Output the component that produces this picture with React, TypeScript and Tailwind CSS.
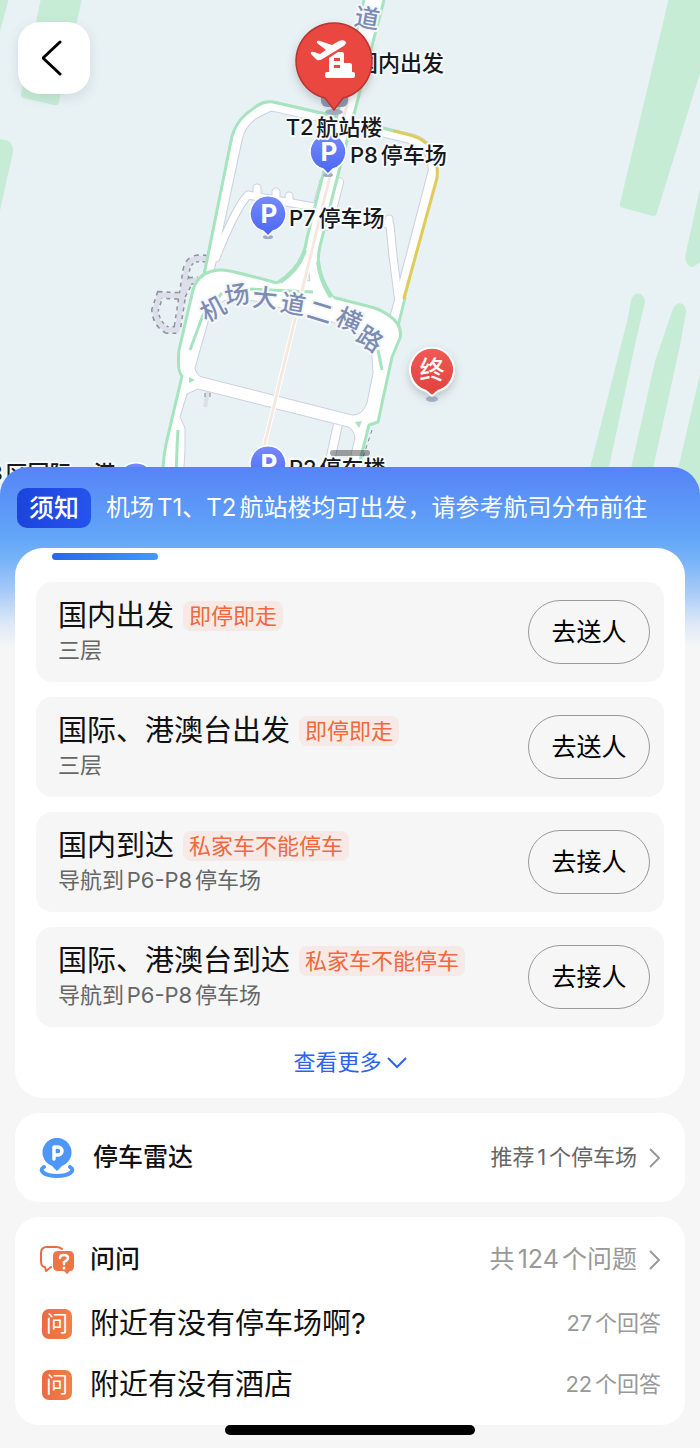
import React from 'react';

type Place = {
  name: string;
  tag: string;
  detail: string;
  action: string;
};

const places: Place[] = [
  { name: '国内出发', tag: '即停即走', detail: '三层', action: '去送人' },
  { name: '国际、港澳台出发', tag: '即停即走', detail: '三层', action: '去送人' },
  { name: '国内到达', tag: '私家车不能停车', detail: '导航到P6-P8停车场', action: '去接人' },
  { name: '国际、港澳台到达', tag: '私家车不能停车', detail: '导航到P6-P8停车场', action: '去接人' },
];

const questions = [
  { title: '附近有没有停车场啊?', answers: '27个回答' },
  { title: '附近有没有酒店', answers: '22个回答' },
];

const roadLabel = [
  { char: '机', x: 213, y: 309, angle: -28 },
  { char: '场', x: 237, y: 295, angle: -10 },
  { char: '大', x: 265, y: 298, angle: 5 },
  { char: '道', x: 293, y: 304, angle: 10 },
  { char: '二', x: 320, y: 312, angle: 17 },
  { char: '横', x: 349, y: 320, angle: 24 },
  { char: '路', x: 370, y: 339, angle: 33 },
  { char: '道', x: 367, y: 18, angle: 10 },
];

const tunnel = 'M207 259 Q188 255 186 272 L177 330 L167 330 Q156 324 155 310 L160 295 L182 296 L190 281 L198 280';
const sideRoads =
  'M216 258 L221 245 Q238 205 248 195 L314 207 M257 195 V188 M276 198 V192 M289 202 V196 M352 214 L390 225 L393 256 L398 295 M389 222 V219';
const outerLoop = 'M206 285 L237 140 Q240 124 254 114 L266 108 Q271 105 277 107 L330 119 L412 139 Q435 147 433 172 L393 325';
const ringRoad =
  'M162 500 Q162 460 167 440 L182 376 Q177 372 179 350 L193 290 Q199 270 222 270 Q230 270 277 283 L375 308 Q404 320 400 338 L392 357 L378 422 L369 425 L350 500 H340 L355 438 Q354 430 348 427 L198 389 L187 394 L180 417 L185 428 V450 L182 500 Z M195 368 L208 322 Q214 300 232 299 L255 301 L292 311 L332 322 Q368 330 372 357 L373 373 L367 403 Q362 416 352 415 L202 377 Q196 375 195 368 Z';

function ParkingPin({ x, y }: { x: number; y: number }) {
  return (
    <g transform={`translate(${x} ${y})`}>
      <ellipse cx="0" cy="23" rx="5" ry="2" fill="#9eabc9" />
      <path
        d="M0 22 L-5 17 A18 18 0 1 1 5 17 Z"
        fill="url(#parking)"
        stroke="#fff"
        strokeWidth="1.5"
        strokeLinejoin="round"
      />
      <text x="1" y="9" textAnchor="middle" className="fill-white text-[26px] font-bold">P</text>
    </g>
  );
}

function AirportMap() {
  return (
    <svg
      className="block h-[497px] w-full bg-[#e8f1f4]"
      viewBox="0 0 700 497"
      preserveAspectRatio="xMidYMid slice"
      role="img"
      aria-label="机场地图"
    >
      <defs>
        <linearGradient id="parking" x1="0" y1="0" x2="0" y2="1">
          <stop offset="0" stopColor="#758afa" />
          <stop offset="1" stopColor="#4a67f5" />
        </linearGradient>
        <linearGradient id="destination" x1="0" y1="0" x2="0" y2="1">
          <stop offset="0" stopColor="#ef5b56" />
          <stop offset="1" stopColor="#e2413d" />
        </linearGradient>
        <filter id="shadow" x="-30%" y="-30%" width="160%" height="160%">
          <feDropShadow dx="0" dy="4" stdDeviation="4" floodColor="#56616b" floodOpacity="0.3" />
        </filter>
      </defs>

      {/* grass */}
      <g fill="#c6ecd5" stroke="#c6ecd5" strokeLinejoin="round" strokeWidth="8">
        <path d="M-6 -6 H6 L-6 38 Z" />
        <path d="M46 -6 H79 L55 101 L25 94 Z" />
        <path d="M-8 145 Q0 142 4 144 Q9 144 9 152 L-4 210 Z" />
        <path d="M674 -6 H720 L653 212 L624 204 Z" />
        <path d="M706 180 L690 253 Q688 261 692 263 L710 250 Z" />
        <path d="M635 301 Q638 294 641 301 L631 344 L598 500 H586 L632 318 Z" />
        <path d="M676 312 Q680 303 682 311 L676 345 L642 500 H628 L659 362 Z" />
        <path d="M706 366 L675 500 H710 Z" />
      </g>

      {/* tunnels */}
      <g fill="none">
        <path d={tunnel} stroke="#8f939c" strokeWidth="8" strokeDasharray="4 4" />
        <path d={tunnel} stroke="#dcdfe9" strokeWidth="5" />
        <path d="M208 390 L205 407" stroke="#dcdfe9" strokeWidth="4" />
        <path d="M205 393 v8 M210 393 v8 M372 430 L362 460" stroke="#83878d" strokeWidth="1" strokeDasharray="4 4" />
      </g>

      {/* side roads */}
      <g fill="none" strokeLinecap="round" strokeLinejoin="round">
        <path d={sideRoads} stroke="#cccfe0" strokeWidth="9" />
        <path d="M338 424 L328 470 M324 182 L314 220 M339 182 L328 226" stroke="#cccfe0" strokeWidth="10" />
        <path d={outerLoop} stroke="#cccfe0" strokeWidth="11" />
        <path d={sideRoads} stroke="#fff" strokeWidth="7" />
        <path d="M338 424 L328 470 M324 182 L314 220 M339 182 L328 226" stroke="#fff" strokeWidth="8" />
        <path d={outerLoop} stroke="#fff" strokeWidth="9" />
        <path d="M203 280 L232 136 Q236 123 246 114 L258 105 Q265 101 273 102 L330 115 L394 131" stroke="#a6e4bf" strokeWidth="3" />
        <path d="M405 298 L397 330" stroke="#a6e4bf" strokeWidth="3" />
        <path d="M394 131 L410 135 Q440 143 437 178 L404 298" stroke="#e0cd58" strokeWidth="3" />
      </g>

      {/* ring road and the central carriageways */}
      <g fill="none" strokeLinejoin="round">
        <path d={ringRoad} fill="#fff" fillRule="evenodd" stroke="#cccfe0" strokeWidth="1" />
        <path
          d="M162 500 Q162 460 167 440 L182 376 Q177 372 179 350 L193 290 Q199 270 222 270 Q230 270 277 283 M328 296 L375 308 Q404 320 400 338 L392 357 L378 422 L369 425 L350 500"
          stroke="#a6e4bf"
          strokeWidth="3"
        />
        <path d="M364 0 L323 175 L306 240 Q303 266 277 283 L300 296 L335 300 Q315 275 319 250 L338 175 L384 0 Z" fill="#fff" />
        <path d="M364 0 L323 175 L307 238 Q304 266 277 283 M384 0 L338 175 L320 246 Q314 272 330 297" stroke="#a6e4bf" strokeWidth="3" />
        <path d="M305 250 Q299 270 280 282 M318 262 Q320 280 332 297" stroke="#a6e4bf" strokeWidth="4" />
        <path d="M308 268 L303 279 L310 281 Z" fill="#e8f1f4" stroke="#cccfe0" strokeWidth="1" />
        <path d="M178 430 Q176 460 176 500 M222 293 L203 315 L190 350 M250 289 L313 292 M378 350 L382 370" stroke="#a6e4bf" strokeWidth="3" />
        <path d="M189 377 L195 380 L189 383 Z M355 422 L362 421 L359 428 Z" fill="#a6e4bf" />
        <path d="M350 92 L329 180 L262 455" stroke="#fff" strokeWidth="5" />
        <path d="M350 92 L329 180 L262 455" stroke="#f7e8df" strokeWidth="3" />
      </g>

      <g
        fontFamily='Inter, "Noto Sans CJK SC", sans-serif'
        stroke="#f4f8fa"
        strokeWidth="4"
        strokeLinejoin="round"
        paintOrder="stroke"
      >
        {roadLabel.map((label, i) => (
          <text
            key={i}
            transform={`translate(${label.x} ${label.y}) rotate(${label.angle})`}
            y="9"
            textAnchor="middle"
            className="fill-[#7d8cb4] text-[25px] font-medium"
          >
            {label.char}
          </text>
        ))}
      </g>

      <g stroke="none" fontFamily='Inter, "Noto Sans CJK SC", sans-serif'>
        <ParkingPin x={328} y={152} />
        <ParkingPin x={268} y={214} />
        <ParkingPin x={268} y={464} />
        <ParkingPin x={136} y={481} />
      </g>

      <g
        fontFamily='Inter, "Noto Sans CJK SC", sans-serif'
        stroke="#f6fafb"
        strokeWidth="4"
        strokeLinejoin="round"
        paintOrder="stroke"
        className="fill-[#17191c] text-[22px] font-medium [text-autospace:normal]"
      >
        <text x="356" y="71">国内出发</text>
        <text x="334" y="135" textAnchor="middle">T2航站楼</text>
        <text x="350" y="163">P8停车场</text>
        <text x="289" y="226">P7停车场</text>
        <text x="289" y="476">P2停车楼</text>
        <text x="-11" y="481">3区国际、港</text>
      </g>

      {/* terminal pin */}
      <rect x="321" y="88" width="27" height="19" rx="6" fill="#8f98b1" />
      <ellipse cx="334" cy="112" rx="9" ry="3" fill="#a5b2c9" />
      <path
        d="M334 110 L325 98 A38 38 0 1 1 343 98 Z"
        fill="#ea4640"
        stroke="#b93530"
        strokeWidth="1.5"
        strokeLinejoin="round"
        filter="url(#shadow)"
      />
      <g fill="#fff">
        <path d="M311 54 Q310 51 314 52 L320 54 L326 50 L317 43 Q316 40 320 41 L332 45 L339 41 Q344 39 346 42 Q346 45 342 47 L324 58 Q320 61 317 60 Z" />
        <path fillRule="evenodd" d="M329 58 L338 52 H342 Q344 52 344 54 V63 H350 Q352 63 352 65 V72 H353 Q355 72 355 74 V76 Q355 78 353 78 H327 Q325 78 325 76 V74 Q325 72 327 72 H329 Z M334 58 V61 H340 V58 Z M334 65 V68 H340 V65 Z" />
      </g>

      {/* destination pin */}
      <ellipse cx="432" cy="399" rx="6" ry="3" fill="#a6b9cd" />
      <path
        d="M432 396 L426 391 A22 22 0 1 1 438 391 Z"
        fill="url(#destination)"
        stroke="#fff"
        strokeWidth="2"
        strokeLinejoin="round"
        filter="url(#shadow)"
      />
      <text
        x="432"
        y="379"
        textAnchor="middle"
        fontFamily='"Noto Sans CJK SC", sans-serif'
        className="fill-white text-[25px] font-medium"
      >
        终
      </text>
    </svg>
  );
}

function ChevronRight() {
  return (
    <svg className="h-5 w-3" viewBox="0 0 12 20" fill="none" stroke="#999" strokeWidth="2" aria-hidden="true">
      <path d="M1 1 L10 10 L1 19" />
    </svg>
  );
}

function ParkingRadarIcon() {
  return (
    <svg className="h-10 w-9" viewBox="0 0 36 40" aria-hidden="true">
      <path d="M5 29 C-1 32 5 38 18 38 C31 38 37 32 31 29" fill="none" stroke="#4e97f8" strokeWidth="4" strokeLinecap="round" />
      <path d="M18 33 L13 28 A14.5 14.5 0 1 1 23 28 Z" fill="#4e97f8" />
      <path d="M15 21 V9 H19 A4 4 0 0 1 19 17 H15" fill="none" stroke="#fff" strokeWidth="3.5" strokeLinecap="round" strokeLinejoin="round" />
    </svg>
  );
}

function AskIcon() {
  return (
    <svg className="h-8 w-9" viewBox="0 0 36 32" aria-hidden="true">
      <path
        d="M23 5 Q21 3 17 3 H8 Q2 3 2 9 V17 Q2 23 6 23 L7 27 L12 23"
        fill="none"
        stroke="#ec6a43"
        strokeWidth="2"
        strokeLinecap="round"
        strokeLinejoin="round"
      />
      <path d="M19 7 H30 Q35 7 35 12 V22 Q35 27 31 27 L28 30 L25 27 H19 Q14 27 14 22 V12 Q14 7 19 7 Z" fill="#ee7443" />
      <path d="M21 14 Q21 11 25 11 Q29 11 29 14 Q29 16 25 18 V20" fill="none" stroke="#fff" strokeWidth="2.5" strokeLinecap="round" />
      <circle cx="25" cy="24" r="1.5" fill="#fff" />
    </svg>
  );
}

function PlaceRow({ place }: { place: Place }) {
  return (
    <li className="flex items-center justify-between rounded-[16px] bg-[#f6f6f6] py-4 pr-[14px] pl-[22px]">
      <div>
        <div className="flex h-9 items-center gap-[9px]">
          <h2 className="text-[29px] leading-9 text-[#111]">{place.name}</h2>
          <span className="rounded-lg bg-[#f6e9e6] px-[6px] text-[22px] leading-[30px] text-[#f0683c]">{place.tag}</span>
        </div>
        <p className="text-[22px] leading-8 text-[#666]">{place.detail}</p>
      </div>
      <button className="h-16 w-[122px] rounded-full border border-[#999] text-[25px] leading-8 text-black">
        {place.action}
      </button>
    </li>
  );
}

export default function App() {
  return (
    <main className="min-h-screen bg-[#f6f6f6] font-['Inter','Noto_Sans_CJK_SC',sans-serif] [text-autospace:normal]">
      <div className="relative">
        <AirportMap />
        <button
          aria-label="返回"
          className="absolute top-[22px] left-[18px] flex h-[72px] w-[72px] items-center justify-center rounded-[22px] bg-white shadow-[0_4px_12px_rgba(80,100,110,0.15)]"
        >
          <svg className="h-9 w-6" viewBox="0 0 24 36" fill="none" stroke="#000" strokeWidth="3" strokeLinecap="round" strokeLinejoin="round" aria-hidden="true">
            <path d="M18 2 L1 18 L18 34" />
          </svg>
        </button>
        <div className="absolute bottom-[41px] left-1/2 h-[6px] w-10 -translate-x-1/2 rounded-full bg-black/35" />
      </div>

      <div className="relative -mt-[30px] rounded-t-[28px] bg-[linear-gradient(to_bottom,#5584f6_0px,#62a6f8_70px,#7ab4f8_95px,#a8cbf7_125px,#dbe7f7_155px,#f6f6f6_180px)]">
        <header className="flex items-center gap-[15px] px-[17px] pt-[21px] pb-5">
          <span className="w-[74px] shrink-0 rounded-[10px] bg-linear-to-r from-[#1c44dc] to-[#2653ee] text-center text-[25px] leading-10 font-medium text-white">
            须知
          </span>
          <p className="text-[24px] leading-10 whitespace-nowrap text-white">机场T1、T2航站楼均可出发，请参考航司分布前往</p>
        </header>

        <div className="flex flex-col gap-[15px] px-[15px]">
          <section className="rounded-[28px] bg-white px-[21px] pt-[5px]">
            <div className="mb-[22px] ml-4 h-[7px] w-[106px] rounded-full bg-linear-to-r from-[#2c64f0] to-[#459af8]" />
            <ul className="flex flex-col gap-[15px]">
              {places.map((place) => (
                <PlaceRow key={place.name} place={place} />
              ))}
            </ul>
            <button className="flex h-[71px] w-full items-center justify-center gap-[5px] text-[22px] text-[#2b62f0]">
              查看更多
              <svg className="h-3 w-5" viewBox="0 0 20 12" fill="none" stroke="currentColor" strokeWidth="2" aria-hidden="true">
                <path d="M1 1 L10 10 L19 1" />
              </svg>
            </button>
          </section>

          <a href="#parking-radar" className="flex h-[89px] items-center rounded-[24px] bg-white px-6">
            <ParkingRadarIcon />
            <h2 className="ml-[18px] text-[25px] font-medium text-[#111]">停车雷达</h2>
            <span className="mr-3 ml-auto text-[22px] text-[#666]">推荐1个停车场</span>
            <ChevronRight />
          </a>

          <section className="rounded-[24px] bg-white px-6 py-[10px]">
            <a href="#questions" className="flex h-[66px] items-center">
              <AskIcon />
              <h2 className="ml-[15px] text-[25px] font-medium text-[#111]">问问</h2>
              <span className="mr-3 ml-auto text-[25px] text-[#999]">共124个问题</span>
              <ChevronRight />
            </a>
            {questions.map((question) => (
              <a key={question.title} href="#question" className="flex h-[61px] items-center">
                <span className="ml-[3px] h-[30px] w-[30px] rounded-[7px] bg-linear-to-r from-[#ec6a43] to-[#f08046] text-center text-[22px] leading-[28px] text-white">
                  问
                </span>
                <span className="ml-[18px] text-[29px] text-[#111]">{question.title}</span>
                <span className="ml-auto text-[22px] text-[#999]">{question.answers}</span>
              </a>
            ))}
          </section>
        </div>

        <div className="pb-[14px]">
          <div className="mx-auto h-[10px] w-[250px] rounded-full bg-black" />
        </div>
      </div>
    </main>
  );
}
